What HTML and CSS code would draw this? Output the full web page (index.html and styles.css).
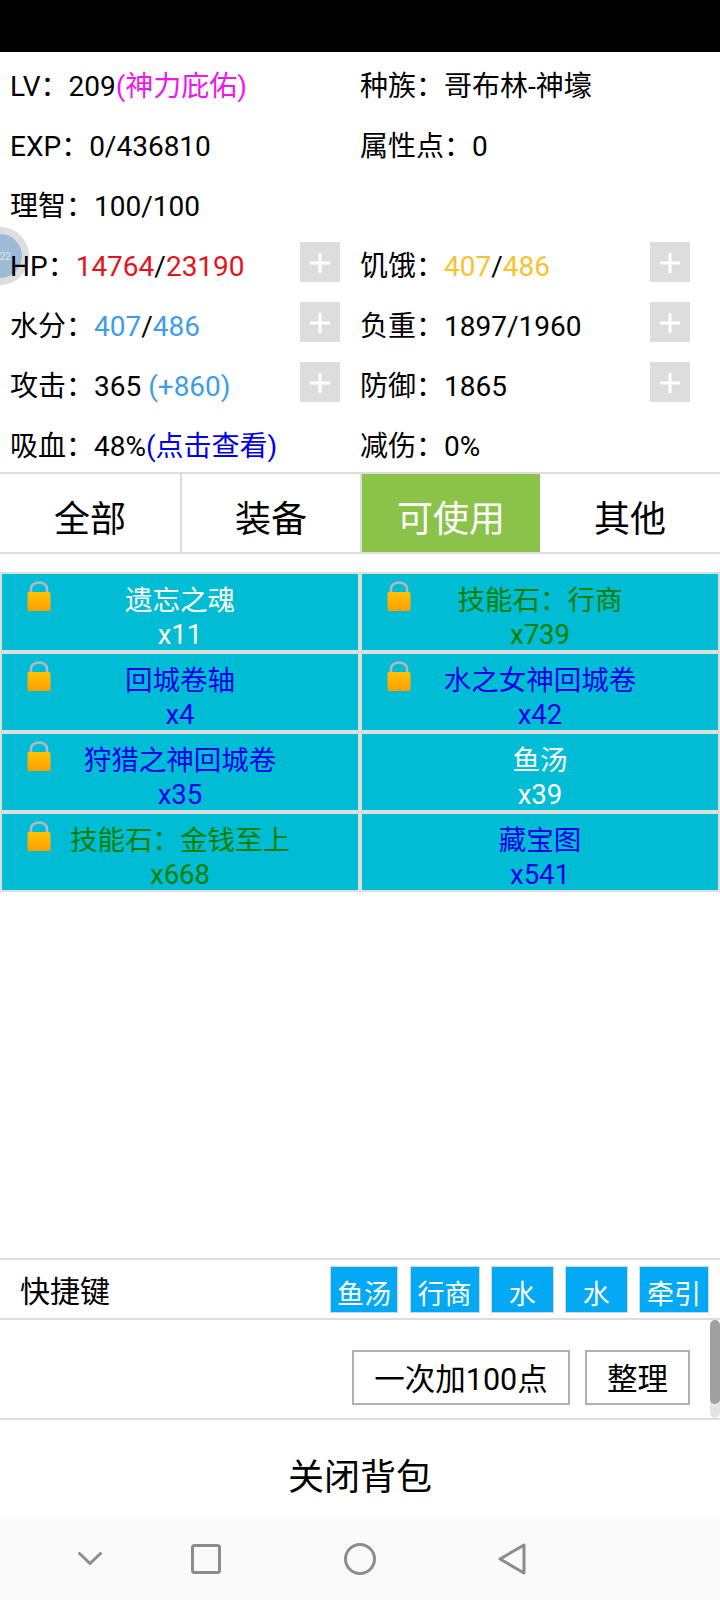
FILE: index.html
```html
<!DOCTYPE html>
<html lang="en">
<head>
  <meta charset="UTF-8" />
  <title>背包</title>
  <link rel="stylesheet" href="styles.css">
</head>
<body>

  <div class="statusbar"></div>

  <div class="float-ball"><span>22</span></div>

  <section class="stats">
    <div class="stat"><span class="stat-text">LV&#xFF1A;209<span class="pink">(神力庇佑)</span></span></div>
    <div class="stat"><span class="stat-text">种族&#xFF1A;哥布林-神壕</span></div>
    <div class="stat"><span class="stat-text">EXP&#xFF1A;0/436810</span></div>
    <div class="stat"><span class="stat-text">属性点&#xFF1A;0</span></div>
    <div class="stat"><span class="stat-text">理智&#xFF1A;100/100</span></div>
    <div class="stat"></div>
    <div class="stat"><span class="stat-text">HP&#xFF1A;<span class="red">14764</span>/<span class="red">23190</span></span><button class="plus"><svg viewBox="0 0 40 40"><path d="M20 11v20M10 21h20"/></svg></button></div>
    <div class="stat"><span class="stat-text">饥饿&#xFF1A;<span class="yellow">407</span>/<span class="yellow">486</span></span><button class="plus"><svg viewBox="0 0 40 40"><path d="M20 11v20M10 21h20"/></svg></button></div>
    <div class="stat"><span class="stat-text">水分&#xFF1A;<span class="sky">407</span>/<span class="sky">486</span></span><button class="plus"><svg viewBox="0 0 40 40"><path d="M20 11v20M10 21h20"/></svg></button></div>
    <div class="stat"><span class="stat-text">负重&#xFF1A;1897/1960</span><button class="plus"><svg viewBox="0 0 40 40"><path d="M20 11v20M10 21h20"/></svg></button></div>
    <div class="stat"><span class="stat-text">攻击&#xFF1A;365 <span class="sky">(+860)</span></span><button class="plus"><svg viewBox="0 0 40 40"><path d="M20 11v20M10 21h20"/></svg></button></div>
    <div class="stat"><span class="stat-text">防御&#xFF1A;1865</span><button class="plus"><svg viewBox="0 0 40 40"><path d="M20 11v20M10 21h20"/></svg></button></div>
    <div class="stat"><span class="stat-text">吸血&#xFF1A;48%<span class="blue">(点击查看)</span></span></div>
    <div class="stat"><span class="stat-text">减伤&#xFF1A;0%</span></div>
  </section>

  <nav class="tabs">
    <div class="tab">全部</div>
    <div class="tab">装备</div>
    <div class="tab active">可使用</div>
    <div class="tab">其他</div>
  </nav>

  <main class="items">
    <div class="item white">
      <svg class="lock" viewBox="0 0 24 30"><use href="#lock"/></svg>
      <div>遗忘之魂</div><div>x11</div>
    </div>
    <div class="item green">
      <svg class="lock" viewBox="0 0 24 30"><use href="#lock"/></svg>
      <div>技能石&#xFF1A;行商</div><div>x739</div>
    </div>
    <div class="item blue">
      <svg class="lock" viewBox="0 0 24 30"><use href="#lock"/></svg>
      <div>回城卷轴</div><div>x4</div>
    </div>
    <div class="item blue">
      <svg class="lock" viewBox="0 0 24 30"><use href="#lock"/></svg>
      <div>水之女神回城卷</div><div>x42</div>
    </div>
    <div class="item blue">
      <svg class="lock" viewBox="0 0 24 30"><use href="#lock"/></svg>
      <div>狩猎之神回城卷</div><div>x35</div>
    </div>
    <div class="item white">
      <div>鱼汤</div><div>x39</div>
    </div>
    <div class="item green">
      <svg class="lock" viewBox="0 0 24 30"><use href="#lock"/></svg>
      <div>技能石&#xFF1A;金钱至上</div><div>x668</div>
    </div>
    <div class="item blue">
      <div>藏宝图</div><div>x541</div>
    </div>
  </main>

  <div class="shortcuts">
    <span class="shortcuts-label">快捷键</span>
    <div class="shortcut-list">
      <button class="shortcut w68">鱼汤</button>
      <button class="shortcut w70">行商</button>
      <button class="shortcut w63">水</button>
      <button class="shortcut w63">水</button>
      <button class="shortcut w70">牵引</button>
    </div>
  </div>

  <div class="actions">
    <button class="action add-points">一次加100点</button>
    <button class="action sort">整理</button>
    <div class="scrolltrack"><div class="scrollthumb"></div></div>
  </div>

  <div class="close-bag">关闭背包</div>

  <div class="navbar">
    <svg class="nav-down" viewBox="0 0 24 13"><path d="M1.500 1.500 12 11.500 22.500 1.500"/></svg>
    <svg class="nav-square" viewBox="0 0 30 30"><rect x="1.500" y="1.500" width="27" height="27" rx="2"/></svg>
    <svg class="nav-circle" viewBox="0 0 32 32"><circle cx="16" cy="16" r="14.500"/></svg>
    <svg class="nav-back" viewBox="0 0 28 32"><path d="M26 2 2 16 26 30Z"/></svg>
  </div>

  <svg class="defs" width="0" height="0">
    <defs>
      <linearGradient id="lockfill" x1="0" y1="0" x2="0" y2="1">
        <stop offset="0" stop-color="#ffc107"/>
        <stop offset="1" stop-color="#ff9f00"/>
      </linearGradient>
      <g id="lock">
        <path d="M4 12V7.500a8 6 0 0 1 16 0V12" fill="none" stroke="#b4b8bc" stroke-width="2.600"/>
        <rect x="0.500" y="11" width="23" height="19" rx="1.500" fill="url(#lockfill)"/>
      </g>
    </defs>
  </svg>

</body>
</html>
```

FILE: styles.css
```css
* {
  box-sizing: border-box;
  margin: 0;
  padding: 0;
}

body {
  width: 720px;
  height: 1600px;
  display: flex;
  flex-direction: column;
  position: relative;
  overflow: hidden;
  background-color: white;
  color: black;
  font-family: Roboto, "Noto Sans CJK SC", sans-serif;
  font-size: 27.5px;
}

button {
  font-family: inherit;
  background: none;
  border: none;
}

.statusbar {
  height: 52px;
  background-color: black;
}

.float-ball {
  position: absolute;
  left: -29px;
  top: 227px;
  width: 58px;
  height: 58px;
  border-radius: 50%;
  border: 7px solid #dcdedf;
  background-color: #9dbbd6;
  display: flex;
  align-items: center;
  justify-content: flex-end;
  padding-right: 11px;
  color: #dbe6ef;
  font-size: 10px;
}

/* stats */
.stats {
  display: grid;
  grid-template-columns: 350px 350px;
  grid-auto-rows: 60px;
  font-size: 28px;
}

.stat {
  display: flex;
  align-items: center;
  justify-content: space-between;
  padding: 0 10px;
}

.stat-text {
  padding-top: 4px;
  white-space: nowrap;
  position: relative;
}

.plus {
  width: 40px;
  height: 40px;
  background-color: #dddddd;
}

.plus svg {
  display: block;
  width: 40px;
  height: 40px;
  fill: none;
  stroke: white;
  stroke-width: 3px;
}

.pink { color: #ee18ee; }
.red { color: #e5141c; }
.yellow { color: #f8c32c; }
.sky { color: #3c9eea; }
.blue { color: #0000e6; }
.green { color: #008000; }
.white { color: white; }

/* tabs */
.tabs {
  display: flex;
  height: 82px;
  border-top: 2px solid #dddddd;
  border-bottom: 2px solid #dddddd;
}

.tab {
  width: 180px;
  display: flex;
  align-items: center;
  justify-content: center;
  border-left: 2px solid #dddddd;
  font-size: 36px;
  padding-top: 6px;
}

.tab:first-child {
  border-left: none;
}

.tab.active {
  background-color: #8bc34a;
  color: white;
}

.tab:last-child {
  border-left: none;
}

/* items */
.items {
  flex: 1;
  margin-top: 18px;
  display: grid;
  grid-template-columns: 360px 360px;
  grid-auto-rows: 80px;
  align-content: start;
}

.item {
  position: relative;
  border: 2px solid #dddddd;
  background-color: #00bcd4;
  text-align: center;
  line-height: 34px;
  padding-top: 10px;
}

.lock {
  position: absolute;
  left: 25px;
  top: 7px;
  width: 24px;
  height: 30px;
}

.defs {
  position: absolute;
}

/* bottom bars */
.shortcuts {
  height: 62px;
  display: flex;
  align-items: center;
  justify-content: space-between;
  border-top: 2px solid #dddddd;
  border-bottom: 2px solid #dddddd;
  padding: 0 11px 0 20px;
}

.shortcuts-label {
  font-size: 30px;
}

.shortcut-list {
  display: flex;
  gap: 11.5px;
}

.shortcut {
  height: 47px;
  background-color: #03a9f4;
  border: 1px solid #cfd8dc;
  color: white;
  font-size: 27px;
  padding-top: 6px;
}

.w68 { width: 68px; }
.w70 { width: 70px; }
.w63 { width: 62.5px; }

.actions {
  height: 100px;
  display: flex;
  align-items: flex-start;
  justify-content: flex-end;
  gap: 15px;
  padding: 30px 30px 0 0;
  position: relative;
  border-bottom: 2px solid #dddddd;
}

.action {
  height: 55px;
  border: 2px solid #b0b0b0;
  font-size: 30.5px;
  color: black;
  padding-bottom: 2px;
}

.add-points { width: 218px; }
.sort { width: 105px; }

.scrolltrack {
  position: absolute;
  right: 0;
  top: 0;
  width: 10px;
  height: 98px;
  background-color: #e4e4e4;
  border-radius: 5px;
}

.scrollthumb {
  height: 84px;
  background-color: #a0a0a0;
  border-radius: 5px;
}

.close-bag {
  height: 97px;
  display: flex;
  align-items: center;
  justify-content: center;
  font-size: 36px;
  padding-top: 10px;
}

/* phone nav bar */
.navbar {
  height: 83px;
  background-color: #fafafa;
  position: relative;
}

.navbar svg {
  position: absolute;
  fill: none;
  stroke: #8c8c8c;
  stroke-width: 3px;
  stroke-linejoin: round;
  stroke-linecap: round;
}

.nav-down { left: 78px; top: 35px; width: 24px; height: 13px; }
.nav-square { left: 191px; top: 27px; width: 30px; height: 30px; }
.nav-circle { left: 344px; top: 26px; width: 32px; height: 32px; }
.nav-back { left: 498px; top: 26px; width: 28px; height: 32px; }
```
